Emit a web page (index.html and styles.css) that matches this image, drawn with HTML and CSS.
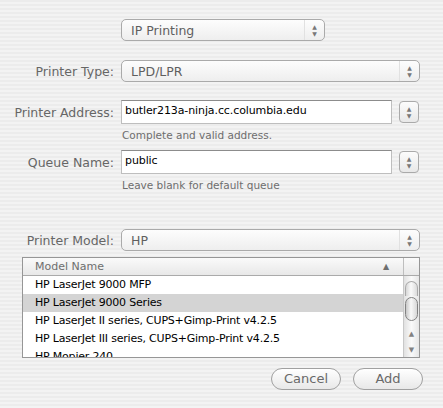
FILE: index.html
```html
<!DOCTYPE html>
<html lang="en">

<head>
    <meta charset="UTF-8">
    <title>Add Printer</title>
    <link rel="stylesheet" href="styles.css">
</head>

<body>
    <div class="dialog">
        <div class="row first">
            <div class="label"></div>
            <div class="popup short"><span>IP Printing</span><span class="arrows">&#9650;<br>&#9660;</span></div>
        </div>

        <div class="row type">
            <div class="label">Printer Type:</div>
            <div class="popup wide"><span>LPD/LPR</span><span class="arrows">&#9650;<br>&#9660;</span></div>
        </div>

        <div class="row address">
            <div class="label">Printer Address:</div>
            <div class="field">butler213a-ninja.cc.columbia.edu</div>
            <div class="stepper">&#9650;<br>&#9660;</div>
        </div>
        <div class="hint">Complete and valid address.</div>

        <div class="row queue">
            <div class="label">Queue Name:</div>
            <div class="field">public</div>
            <div class="stepper">&#9650;<br>&#9660;</div>
        </div>
        <div class="hint">Leave blank for default queue</div>

        <div class="row model">
            <div class="label">Printer Model:</div>
            <div class="popup wide"><span>HP</span><span class="arrows">&#9650;<br>&#9660;</span></div>
        </div>

        <div class="table">
            <div class="thead">
                <div class="th">Model Name</div>
                <div class="sort">&#9650;</div>
                <div class="corner"></div>
            </div>
            <div class="tbody">
                <div class="rows">
                    <div class="tr">HP LaserJet 9000 MFP</div>
                    <div class="tr selected">HP LaserJet 9000 Series</div>
                    <div class="tr">HP LaserJet II series, CUPS+Gimp-Print v4.2.5</div>
                    <div class="tr">HP LaserJet III series, CUPS+Gimp-Print v4.2.5</div>
                    <div class="tr">HP Mopier 240</div>
                </div>
                <div class="scrollbar">
                    <div class="track-top"></div>
                    <div class="thumb"></div>
                    <div class="scroll-arrows">
                        <div class="sa">&#9650;</div>
                        <div class="sa">&#9660;</div>
                    </div>
                </div>
            </div>
        </div>

        <div class="buttons">
            <div class="btn">Cancel</div>
            <div class="btn add">Add</div>
        </div>
    </div>
</body>

</html>
```

FILE: styles.css
```css
body {
    margin: 0;
    font-family: 'DejaVu Sans', sans-serif;
    font-size: 12px;
    color: rgb(100, 100, 100);
    background: repeating-linear-gradient(to bottom,
            rgb(236, 236, 236) 0px, rgb(236, 236, 236) 2px,
            rgb(243, 243, 243) 2px, rgb(243, 243, 243) 4px);
    width: 443px;
    height: 408px;
    overflow: hidden;
}

.dialog {
    display: flex;
    flex-direction: column;
    padding-top: 19px;
}

.row {
    display: flex;
    align-items: center;
}

.label {
    width: 121px;
    text-align: right;
    padding-right: 7px;
    box-sizing: border-box;
    color: rgb(102, 102, 102);
    font-size: 12.5px;
    flex-shrink: 0;
}

.type {
    margin-top: 19px;
}

.address {
    margin-top: 18px;
}

.queue {
    margin-top: 7px;
}

.model {
    margin-top: 36px;
}

.popup {
    height: 22px;
    box-sizing: border-box;
    border: 1px solid rgb(170, 170, 170);
    border-radius: 5px;
    background: linear-gradient(to bottom, rgb(253, 253, 253), rgb(238, 238, 238));
    display: flex;
    align-items: center;
    justify-content: space-between;
    padding-left: 9px;
    color: rgb(95, 95, 95);
    font-size: 12.5px;
}

.popup.short {
    width: 204px;
}

.popup.wide {
    width: 299px;
}

.arrows {
    width: 20px;
    height: 20px;
    border-left: 1px solid rgb(225, 225, 225);
    font-size: 6px;
    line-height: 7px;
    text-align: center;
    color: rgb(120, 120, 120);
    padding-top: 3px;
    box-sizing: border-box;
}

.field {
    width: 271px;
    height: 24px;
    box-sizing: border-box;
    border: 1px solid rgb(190, 190, 190);
    border-top-color: rgb(140, 140, 140);
    background: rgb(255, 255, 255);
    color: rgb(0, 0, 0);
    font-size: 11px;
    letter-spacing: -0.1px;
    padding: 3px 0 0 3px;
}

.stepper {
    width: 20px;
    height: 22px;
    box-sizing: border-box;
    margin-left: 7px;
    border: 1px solid rgb(170, 170, 170);
    border-radius: 4px;
    background: linear-gradient(to bottom, rgb(252, 252, 252), rgb(232, 232, 232));
    font-size: 6px;
    line-height: 7px;
    text-align: center;
    color: rgb(120, 120, 120);
    padding-top: 3px;
}

.hint {
    padding-left: 122px;
    margin-top: 5px;
    font-size: 10.5px;
    color: rgb(110, 110, 110);
    height: 14px;
}

.table {
    margin: 6px 0 0 22px;
    width: 398px;
    height: 101px;
    box-sizing: border-box;
    border: 1px solid rgb(150, 150, 150);
    background: rgb(255, 255, 255);
    overflow: hidden;
}

.thead {
    display: flex;
    height: 17px;
    border-bottom: 1px solid rgb(170, 170, 170);
    background: linear-gradient(to bottom, rgb(250, 250, 250), rgb(232, 232, 232));
    font-size: 11px;
    color: rgb(110, 110, 110);
}

.th {
    flex: 1;
    padding: 2px 0 0 12px;
}

.sort {
    width: 20px;
    font-size: 8px;
    padding-top: 4px;
    color: rgb(110, 110, 110);
}

.corner {
    width: 15px;
    border-left: 1px solid rgb(190, 190, 190);
}

.tbody {
    display: flex;
}

.rows {
    flex: 1;
    overflow: hidden;
    height: 82px;
}

.tr {
    height: 18px;
    padding: 2px 0 0 12px;
    box-sizing: border-box;
    color: rgb(0, 0, 0);
    font-size: 11px;
    letter-spacing: -0.2px;
    white-space: nowrap;
}

.tr.selected {
    background: rgb(212, 212, 212);
}

.scrollbar {
    width: 15px;
    border-left: 1px solid rgb(200, 200, 200);
    background: linear-gradient(to right, rgb(225, 225, 225), rgb(250, 250, 250), rgb(230, 230, 230));
    display: flex;
    flex-direction: column;
}

.track-top {
    margin: 5px 1px 0;
    height: 14px;
    border: 1px solid rgb(170, 170, 170);
    border-bottom: none;
    border-radius: 7px 7px 0 0;
    background: linear-gradient(to right, rgb(215, 215, 215), rgb(250, 250, 250) 45%, rgb(220, 220, 220));
}

.thumb {
    margin: 1px 1px 0;
    height: 22px;
    border: 1px solid rgb(130, 130, 130);
    border-radius: 7px;
    background: linear-gradient(to right, rgb(200, 200, 200), rgb(248, 248, 248) 45%, rgb(215, 215, 215));
}

.scroll-arrows {
    display: flex;
    flex-direction: column;
    margin-top: auto;
}

.sa {
    height: 16px;
    font-size: 7px;
    text-align: center;
    line-height: 16px;
    color: rgb(130, 130, 130);
}

.buttons {
    display: flex;
    justify-content: flex-end;
    gap: 12px;
    margin: 10px 20px 0 0;
}

.btn {
    width: 70px;
    height: 22px;
    box-sizing: border-box;
    border: 1px solid rgb(160, 160, 160);
    border-radius: 11px;
    background: linear-gradient(to bottom, rgb(255, 255, 255), rgb(232, 232, 232));
    text-align: center;
    font-size: 13px;
    line-height: 20px;
    color: rgb(105, 105, 105);
}
```
